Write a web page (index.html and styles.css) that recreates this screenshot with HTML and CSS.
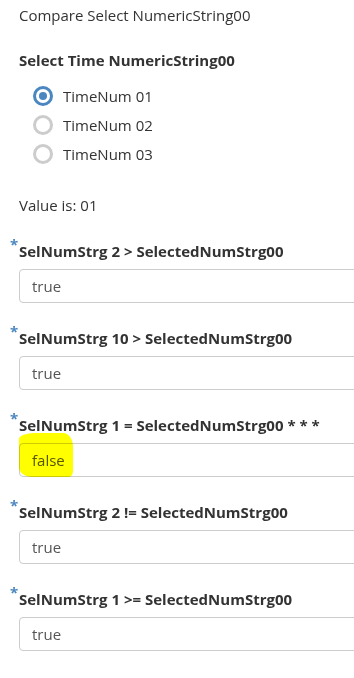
FILE: index.html
```html
<!DOCTYPE html>
<html lang="en">
<head>
  <meta charset="UTF-8" />
  <meta name="viewport" content="width=device-width, initial-scale=1.0"/>
  <title>Compare Select NumericString00</title>
  <link rel="stylesheet" href="styles.css">
</head>
<body>
<div class="page">
  <div class="page-title">Compare Select NumericString00</div>

  <!-- === Radio group === -->
  <div class="group">
    <div class="group-label">Select Time NumericString00</div>
    <div class="radio-list">
      <label class="radio checked"><span class="dot"></span>TimeNum 01</label>
      <label class="radio"><span class="dot"></span>TimeNum 02</label>
      <label class="radio"><span class="dot"></span>TimeNum 03</label>
    </div>
  </div>

  <div class="value">Value is: 01</div>

  <!-- === Results === -->
  <div class="field">
    <div class="field-label">SelNumStrg 2 &gt; SelectedNumStrg00</div>
    <div class="field-input">true</div>
  </div>
  <div class="field">
    <div class="field-label">SelNumStrg 10 &gt; SelectedNumStrg00</div>
    <div class="field-input">true</div>
  </div>
  <div class="field">
    <div class="field-label">SelNumStrg 1 = SelectedNumStrg00 * * *</div>
    <div class="field-input">false<span class="marker"></span></div>
  </div>
  <div class="field">
    <div class="field-label">SelNumStrg 2 != SelectedNumStrg00</div>
    <div class="field-input">true</div>
  </div>
  <div class="field">
    <div class="field-label">SelNumStrg 1 &gt;= SelectedNumStrg00</div>
    <div class="field-input">true</div>
  </div>
</div>
</body>
</html>
```

FILE: styles.css
```css
* {
  box-sizing: border-box;
}

html {
  overflow: hidden;
}

body {
  margin: 0;
  font-family: 'Open Sans', sans-serif;
  font-size: 15px;
  color: #333333;
  background-color: #FFFFFF;
}

.page {
  padding: 5px 0 0 19px;
  width: 380px;
}

.page-title {
  line-height: 20px;
  margin-bottom: 25px;
}

/* ===== Radio group ===== */
.group-label {
  font-weight: bold;
  line-height: 20px;
  margin-bottom: 16px;
}

.radio-list {
  display: flex;
  flex-direction: column;
  gap: 9px;
  padding-left: 14px;
}

.radio {
  display: flex;
  align-items: center;
  gap: 10px;
  line-height: 20px;
}

.dot {
  width: 20px;
  height: 20px;
  border-radius: 50%;
  border: 3px solid #CCCCCC;
  display: flex;
  align-items: center;
  justify-content: center;
}

.radio.checked .dot {
  border-color: #4A86C0;
}

.radio.checked .dot::after {
  content: "";
  width: 8px;
  height: 8px;
  border-radius: 50%;
  background-color: #4A86C0;
}

.value {
  margin-top: 31px;
  line-height: 20px;
  margin-bottom: 26px;
}

/* ===== Result fields ===== */
.field {
  margin-bottom: 25px;
}

.field-label {
  position: relative;
  font-weight: bold;
  line-height: 20px;
  margin-bottom: 8px;
}

.field-label::before {
  content: "*";
  position: absolute;
  left: -9px;
  top: -7px;
  color: #4A86C0;
  font-size: 15px;
}

.field-input {
  position: relative;
  height: 34px;
  padding: 0 12px;
  line-height: 32px;
  border: 1px solid #CCCCCC;
  border-radius: 4px;
  color: #555555;
}

.marker {
  position: absolute;
  left: -1px;
  top: -11px;
  width: 54px;
  height: 44px;
  background-color: #FFFF00;
  mix-blend-mode: multiply;
  border-radius: 16px 10px 4px 12px / 6px 14px 6px 10px;
}
```
